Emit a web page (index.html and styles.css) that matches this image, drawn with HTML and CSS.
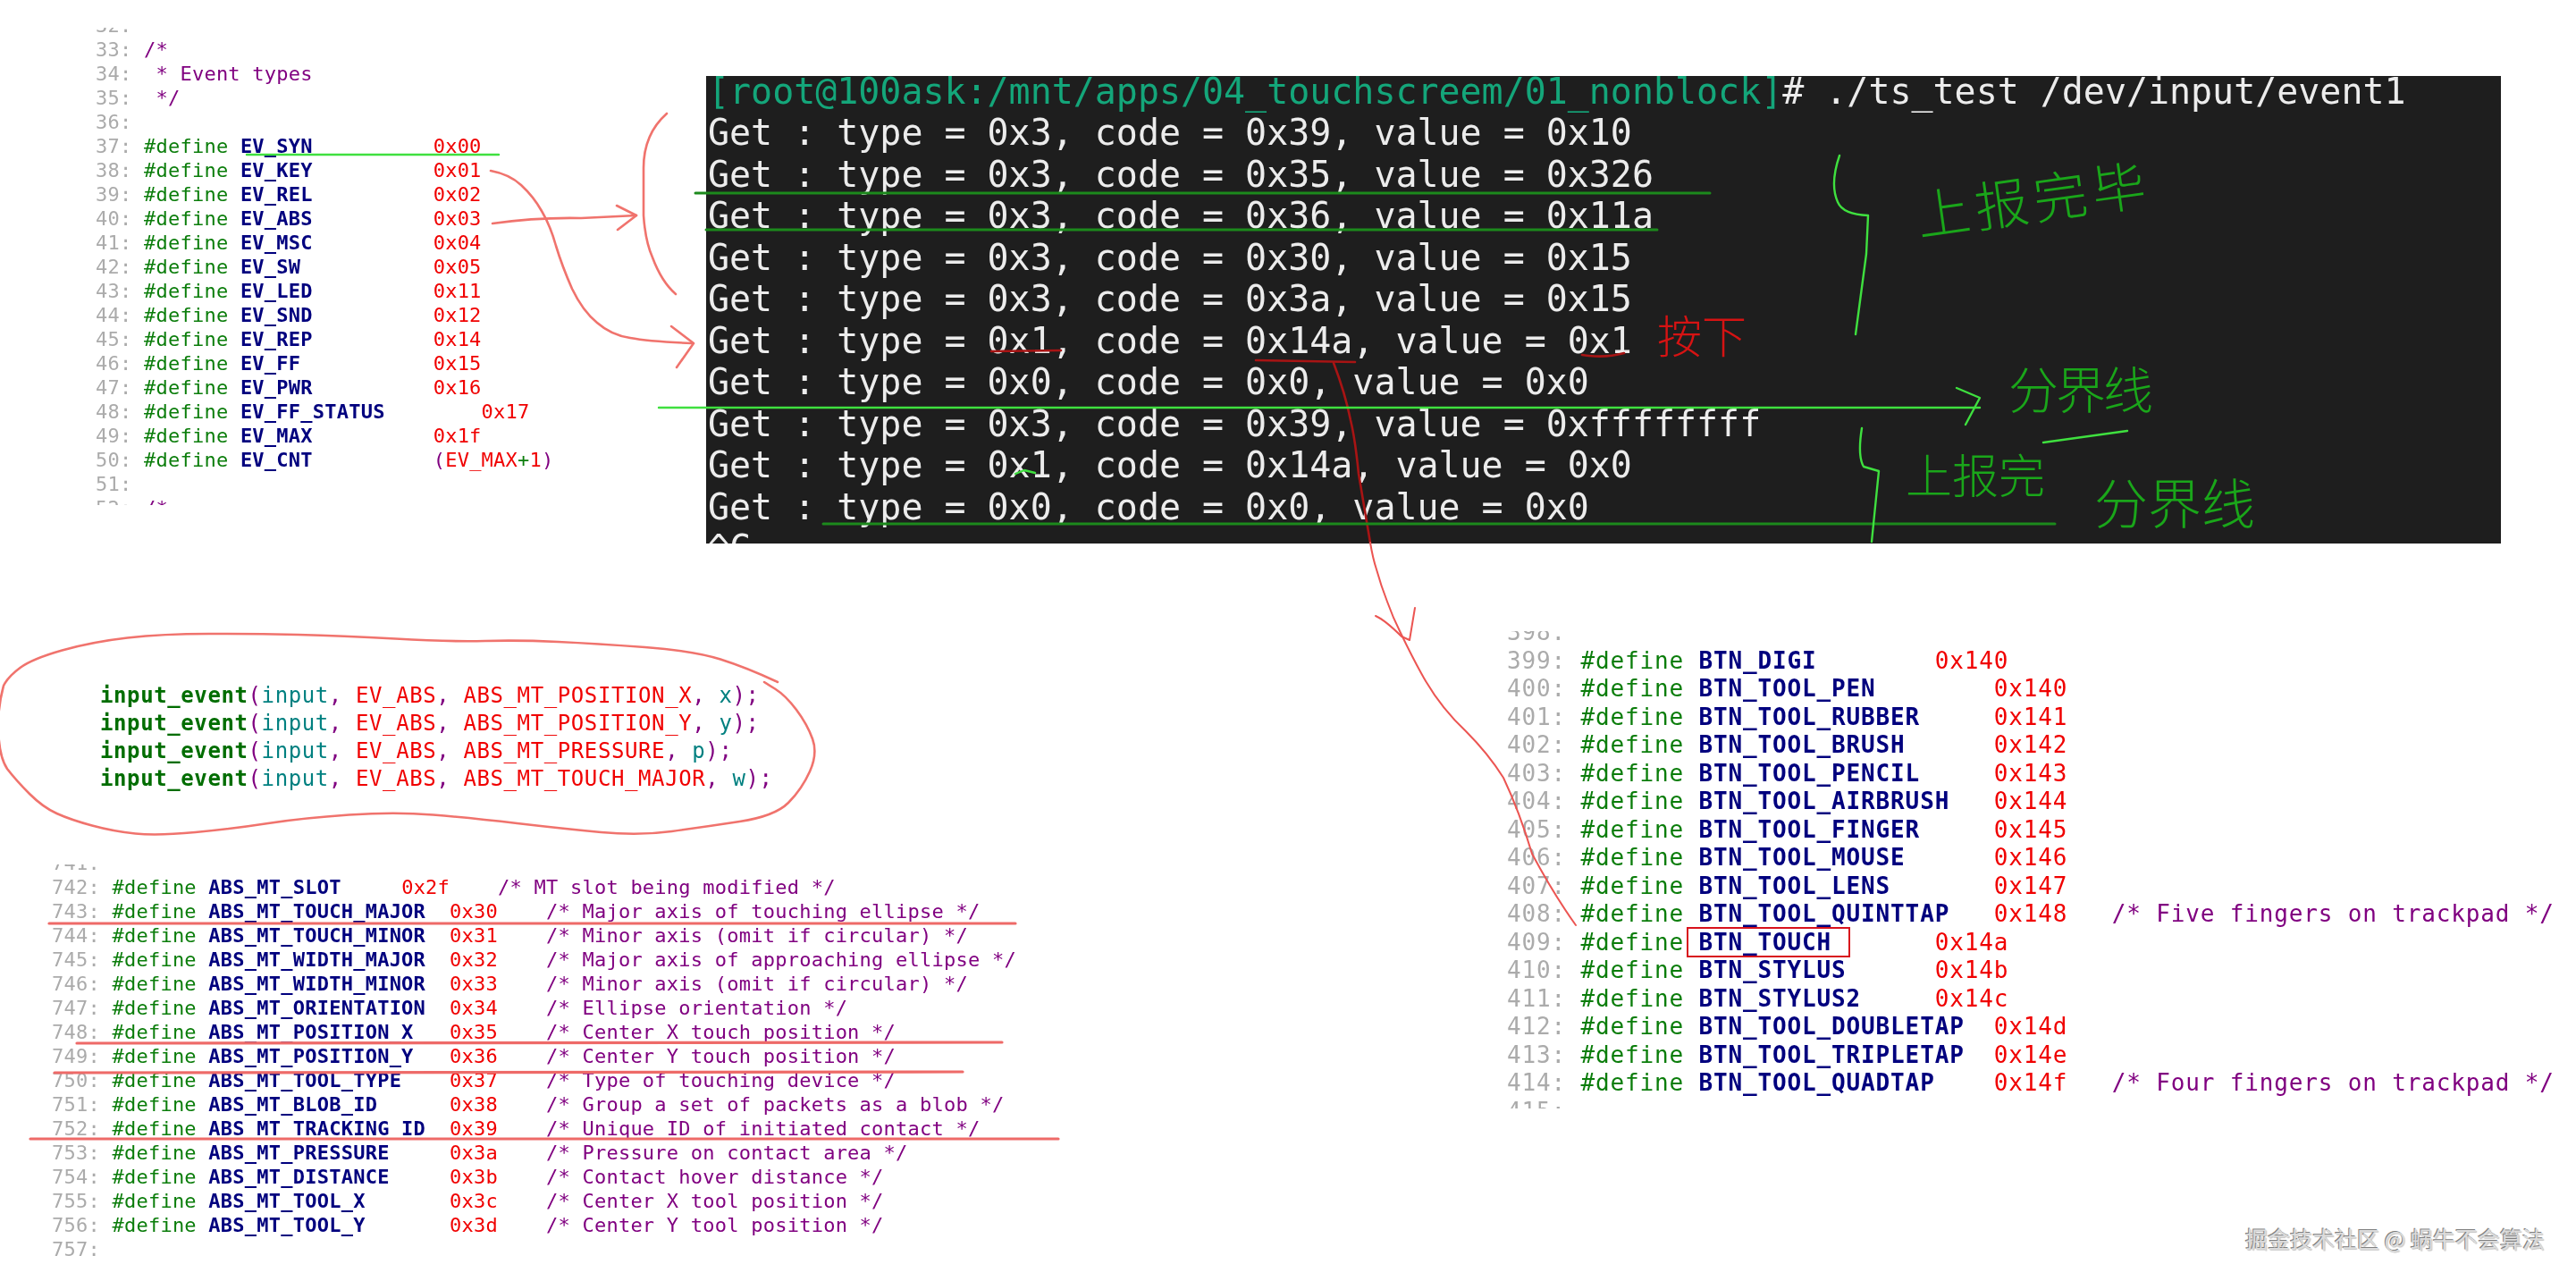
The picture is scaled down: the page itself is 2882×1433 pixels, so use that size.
FILE: index.html
```html
<!DOCTYPE html>
<html lang="zh">
<head>
<meta charset="utf-8">
<title>Touch screen input events</title>
<link rel="stylesheet" href="styles.css">
</head>
<body>
<main class="board">

<section class="shot shot-events"><pre class="code"><span class="ln">32:</span>
<span class="ln">33:</span> <span class="cmt">/*</span>
<span class="ln">34:</span> <span class="cmt"> * Event types</span>
<span class="ln">35:</span> <span class="cmt"> */</span>
<span class="ln">36:</span>
<span class="ln">37:</span> <span class="def">#define</span> <span class="sym">EV_SYN</span>          <span class="val">0x00</span>
<span class="ln">38:</span> <span class="def">#define</span> <span class="sym">EV_KEY</span>          <span class="val">0x01</span>
<span class="ln">39:</span> <span class="def">#define</span> <span class="sym">EV_REL</span>          <span class="val">0x02</span>
<span class="ln">40:</span> <span class="def">#define</span> <span class="sym">EV_ABS</span>          <span class="val">0x03</span>
<span class="ln">41:</span> <span class="def">#define</span> <span class="sym">EV_MSC</span>          <span class="val">0x04</span>
<span class="ln">42:</span> <span class="def">#define</span> <span class="sym">EV_SW</span>           <span class="val">0x05</span>
<span class="ln">43:</span> <span class="def">#define</span> <span class="sym">EV_LED</span>          <span class="val">0x11</span>
<span class="ln">44:</span> <span class="def">#define</span> <span class="sym">EV_SND</span>          <span class="val">0x12</span>
<span class="ln">45:</span> <span class="def">#define</span> <span class="sym">EV_REP</span>          <span class="val">0x14</span>
<span class="ln">46:</span> <span class="def">#define</span> <span class="sym">EV_FF</span>           <span class="val">0x15</span>
<span class="ln">47:</span> <span class="def">#define</span> <span class="sym">EV_PWR</span>          <span class="val">0x16</span>
<span class="ln">48:</span> <span class="def">#define</span> <span class="sym">EV_FF_STATUS</span>        <span class="val">0x17</span>
<span class="ln">49:</span> <span class="def">#define</span> <span class="sym">EV_MAX</span>          <span class="val">0x1f</span>
<span class="ln">50:</span> <span class="def">#define</span> <span class="sym">EV_CNT</span>          <span class="cmt">(</span><span class="val">EV_MAX</span><span class="def">+</span><span class="val">1</span><span class="cmt">)</span>
<span class="ln">51:</span>
<span class="ln">52:</span> <span class="cmt">/*</span></pre></section>

<section class="shot shot-term"><pre class="term"><span class="prompt">[root@100ask:/mnt/apps/04_touchscreem/01_nonblock]</span># ./ts_test /dev/input/event1
Get : type = 0x3, code = 0x39, value = 0x10
Get : type = 0x3, code = 0x35, value = 0x326
Get : type = 0x3, code = 0x36, value = 0x11a
Get : type = 0x3, code = 0x30, value = 0x15
Get : type = 0x3, code = 0x3a, value = 0x15
Get : type = 0x1, code = 0x14a, value = 0x1
Get : type = 0x0, code = 0x0, value = 0x0
Get : type = 0x3, code = 0x39, value = 0xffffffff
Get : type = 0x1, code = 0x14a, value = 0x0
Get : type = 0x0, code = 0x0, value = 0x0
^C</pre></section>

<section class="shot shot-input"><pre class="code code-input"><span class="fn">input_event</span><span class="cmt">(</span><span class="arg">input</span><span class="cmt">,</span> <span class="val">EV_ABS</span><span class="cmt">,</span> <span class="val">ABS_MT_POSITION_X</span><span class="cmt">,</span> <span class="arg">x</span><span class="cmt">);</span>
<span class="fn">input_event</span><span class="cmt">(</span><span class="arg">input</span><span class="cmt">,</span> <span class="val">EV_ABS</span><span class="cmt">,</span> <span class="val">ABS_MT_POSITION_Y</span><span class="cmt">,</span> <span class="arg">y</span><span class="cmt">);</span>
<span class="fn">input_event</span><span class="cmt">(</span><span class="arg">input</span><span class="cmt">,</span> <span class="val">EV_ABS</span><span class="cmt">,</span> <span class="val">ABS_MT_PRESSURE</span><span class="cmt">,</span> <span class="arg">p</span><span class="cmt">);</span>
<span class="fn">input_event</span><span class="cmt">(</span><span class="arg">input</span><span class="cmt">,</span> <span class="val">EV_ABS</span><span class="cmt">,</span> <span class="val">ABS_MT_TOUCH_MAJOR</span><span class="cmt">,</span> <span class="arg">w</span><span class="cmt">);</span></pre></section>

<section class="shot shot-abs"><pre class="code code-abs"><span class="ln">741:</span>
<span class="ln">742:</span> <span class="def">#define</span> <span class="sym">ABS_MT_SLOT</span>     <span class="val">0x2f</span>    <span class="cmt">/* MT slot being modified */</span>
<span class="ln">743:</span> <span class="def">#define</span> <span class="sym">ABS_MT_TOUCH_MAJOR</span>  <span class="val">0x30</span>    <span class="cmt">/* Major axis of touching ellipse */</span>
<span class="ln">744:</span> <span class="def">#define</span> <span class="sym">ABS_MT_TOUCH_MINOR</span>  <span class="val">0x31</span>    <span class="cmt">/* Minor axis (omit if circular) */</span>
<span class="ln">745:</span> <span class="def">#define</span> <span class="sym">ABS_MT_WIDTH_MAJOR</span>  <span class="val">0x32</span>    <span class="cmt">/* Major axis of approaching ellipse */</span>
<span class="ln">746:</span> <span class="def">#define</span> <span class="sym">ABS_MT_WIDTH_MINOR</span>  <span class="val">0x33</span>    <span class="cmt">/* Minor axis (omit if circular) */</span>
<span class="ln">747:</span> <span class="def">#define</span> <span class="sym">ABS_MT_ORIENTATION</span>  <span class="val">0x34</span>    <span class="cmt">/* Ellipse orientation */</span>
<span class="ln">748:</span> <span class="def">#define</span> <span class="sym">ABS_MT_POSITION_X</span>   <span class="val">0x35</span>    <span class="cmt">/* Center X touch position */</span>
<span class="ln">749:</span> <span class="def">#define</span> <span class="sym">ABS_MT_POSITION_Y</span>   <span class="val">0x36</span>    <span class="cmt">/* Center Y touch position */</span>
<span class="ln">750:</span> <span class="def">#define</span> <span class="sym">ABS_MT_TOOL_TYPE</span>    <span class="val">0x37</span>    <span class="cmt">/* Type of touching device */</span>
<span class="ln">751:</span> <span class="def">#define</span> <span class="sym">ABS_MT_BLOB_ID</span>      <span class="val">0x38</span>    <span class="cmt">/* Group a set of packets as a blob */</span>
<span class="ln">752:</span> <span class="def">#define</span> <span class="sym">ABS_MT_TRACKING_ID</span>  <span class="val">0x39</span>    <span class="cmt">/* Unique ID of initiated contact */</span>
<span class="ln">753:</span> <span class="def">#define</span> <span class="sym">ABS_MT_PRESSURE</span>     <span class="val">0x3a</span>    <span class="cmt">/* Pressure on contact area */</span>
<span class="ln">754:</span> <span class="def">#define</span> <span class="sym">ABS_MT_DISTANCE</span>     <span class="val">0x3b</span>    <span class="cmt">/* Contact hover distance */</span>
<span class="ln">755:</span> <span class="def">#define</span> <span class="sym">ABS_MT_TOOL_X</span>       <span class="val">0x3c</span>    <span class="cmt">/* Center X tool position */</span>
<span class="ln">756:</span> <span class="def">#define</span> <span class="sym">ABS_MT_TOOL_Y</span>       <span class="val">0x3d</span>    <span class="cmt">/* Center Y tool position */</span>
<span class="ln">757:</span></pre></section>

<section class="shot shot-btn"><pre class="code code-btn"><span class="ln">398:</span>
<span class="ln">399:</span> <span class="def">#define</span> <span class="sym">BTN_DIGI</span>        <span class="val">0x140</span>
<span class="ln">400:</span> <span class="def">#define</span> <span class="sym">BTN_TOOL_PEN</span>        <span class="val">0x140</span>
<span class="ln">401:</span> <span class="def">#define</span> <span class="sym">BTN_TOOL_RUBBER</span>     <span class="val">0x141</span>
<span class="ln">402:</span> <span class="def">#define</span> <span class="sym">BTN_TOOL_BRUSH</span>      <span class="val">0x142</span>
<span class="ln">403:</span> <span class="def">#define</span> <span class="sym">BTN_TOOL_PENCIL</span>     <span class="val">0x143</span>
<span class="ln">404:</span> <span class="def">#define</span> <span class="sym">BTN_TOOL_AIRBRUSH</span>   <span class="val">0x144</span>
<span class="ln">405:</span> <span class="def">#define</span> <span class="sym">BTN_TOOL_FINGER</span>     <span class="val">0x145</span>
<span class="ln">406:</span> <span class="def">#define</span> <span class="sym">BTN_TOOL_MOUSE</span>      <span class="val">0x146</span>
<span class="ln">407:</span> <span class="def">#define</span> <span class="sym">BTN_TOOL_LENS</span>       <span class="val">0x147</span>
<span class="ln">408:</span> <span class="def">#define</span> <span class="sym">BTN_TOOL_QUINTTAP</span>   <span class="val">0x148</span>   <span class="cmt">/* Five fingers on trackpad */</span>
<span class="ln">409:</span> <span class="def">#define</span> <span class="sym">BTN_TOUCH</span>       <span class="val">0x14a</span>
<span class="ln">410:</span> <span class="def">#define</span> <span class="sym">BTN_STYLUS</span>      <span class="val">0x14b</span>
<span class="ln">411:</span> <span class="def">#define</span> <span class="sym">BTN_STYLUS2</span>     <span class="val">0x14c</span>
<span class="ln">412:</span> <span class="def">#define</span> <span class="sym">BTN_TOOL_DOUBLETAP</span>  <span class="val">0x14d</span>
<span class="ln">413:</span> <span class="def">#define</span> <span class="sym">BTN_TOOL_TRIPLETAP</span>  <span class="val">0x14e</span>
<span class="ln">414:</span> <span class="def">#define</span> <span class="sym">BTN_TOOL_QUADTAP</span>    <span class="val">0x14f</span>   <span class="cmt">/* Four fingers on trackpad */</span>
<span class="ln">415:</span></pre></section>

<div class="mark-box"></div>

<svg class="ink" width="2882" height="1433" viewBox="0 0 2882 1433" aria-hidden="true">
  <g class="ink-red">
    <path d="M549,191 Q570,195 583,207 Q597,220 606,236 Q615.6,252 622,275 Q629,298 640,323 Q652,348 668,361 Q684,375 705,378 Q726,382 774,384"/>
    <path d="M751,365 L776,384 L757,411"/>
    <path d="M551,250 Q600,243 650,244 L712,241"/>
    <path d="M690,230 L712,241 L691,257"/>
    <path d="M746,127 Q720,150 720,188 L720,241 Q722,270 730,288 Q740,315 756,329"/>
    <path d="M870,763 Q836,747 806,737.5 Q776,728 721.5,724 Q667,720 624.5,718 Q582,716 542.5,717 Q503,718 442.5,714.5 Q382,711 333.5,710 Q285,709 233.5,709 Q182,709 142.5,713.5 Q103,718 69.5,727.5 Q36,737 22.5,747 Q9,757 4,767 Q-2,790 -2,810 Q-2,845 8,860 Q18,873 33,888 Q48,903 63.5,910 Q79,917 103,923.5 Q127,930 151.5,932.5 Q176,935 218.5,931 Q261,927 300,921 Q339,915 390.5,911.5 Q442,908 484.5,911.5 Q527,915 578.5,921 Q630,927 672.5,931 Q715,935 751.5,930 Q788,925 827.5,919 Q867,913 882,898 Q897,883 906,863 Q915,843 909,826.5 Q903,810 891,794 Q879,778 867,770.5 Q861,767 855,763"/>
    <path class="strike" d="M55,1033 L1136,1033"/>
    <path class="strike" d="M86,1167 L1121,1166"/>
    <path class="strike" d="M61,1200 L1077,1199"/>
    <path class="strike" d="M34,1274 L1184,1274"/>
  </g>
  <g class="ink-dark">
    <path d="M1109,393 L1187,392"/>
    <path d="M1770,397 Q1795,401 1817,395"/>
    <path d="M1405,403 L1516,405"/>
    <path d="M1492,406 Q1505,440 1511,470 Q1516,490 1520,530 L1533,607"/>
  </g>
  <g class="ink-thin">
    <path d="M1533,607 Q1536,625 1540,637 Q1545,655 1552,673 Q1558,690 1567,708 Q1580,735 1590,753 Q1610,790 1640,818 Q1665,843 1682,870 Q1700,908 1714,955 Q1738,1000 1763,1035"/>
    <path d="M1539,689 Q1550,694 1568,712 L1577,716 L1583,680"/>
  </g>
  <g class="ink-green">
    <path d="M276,173 L558,173"/>
    <path d="M737,456 L2215,456"/>
    <path class="dim" d="M778,216 L1913,216"/>
    <path class="dim" d="M790,257 L1854,257"/>
    <path class="dim" d="M921,586 L2299,586"/>
    <path d="M1136,530 L1146,526 L1158,529"/>
    <path d="M2058,174 Q2047,206 2056,226 Q2062,240 2090,241 L2088,284 L2076,374"/>
    <path d="M2189,434 L2215,445 L2199,475"/>
    <path d="M2286,495 L2380,482"/>
    <path d="M2083,479 Q2078,510 2085,522 L2102,527 L2094,606"/>
  </g>
</svg>

<span class="hand hand-done">上报完毕</span>
<span class="hand hand-down">按下</span>
<span class="hand hand-split">分界线</span>
<span class="hand hand-rep">上报完</span>
<span class="hand hand-split2">分界线</span>

<p class="watermark">掘金技术社区 @ 蜗牛不会算法</p>
</main>
</body>
</html>
```
FILE: styles.css
```css
* { box-sizing: border-box; }
html, body { margin: 0; padding: 0; background: #fff; }

.board {
  position: relative;
  width: 2882px;
  height: 1433px;
  overflow: hidden;
  background: #fff;
}

.shot { position: absolute; overflow: hidden; }

.code, .term {
  margin: 0;
  font-family: "DejaVu Sans Mono", monospace;
  white-space: pre;
  filter: blur(0.45px);
}

.code { font-size: 22px; letter-spacing: 0.24px; line-height: 27px; }

.shot-events { left: 107px; top: 31px; width: 700px; height: 534px; }
.shot-events .code { margin-top: -16px; }

.shot-abs { left: 58px; top: 967px; width: 1130px; height: 453px; }
.code-abs { margin-top: -15px; }

.shot-input { left: 112px; top: 763px; width: 790px; height: 130px; }
.code-input { font-size: 24px; letter-spacing: 0.6px; line-height: 31px; }

.shot-btn { left: 1686px; top: 706px; width: 1190px; height: 534px; }
.code-btn { font-size: 26px; letter-spacing: 0.85px; line-height: 31.5px; margin-top: -14px; }

.ln { color: #ababab; }
.def { color: #0b7d0b; }
.sym { color: #00007e; font-weight: 700; }
.val { color: #f00000; }
.cmt { color: #800080; }
.fn { color: #006d00; font-weight: 700; }
.arg { color: #008080; }

.shot-term {
  left: 790px;
  top: 85px;
  width: 2008px;
  height: 523px;
  background: #1e1e1e;
}
.term {
  margin-top: -6px;
  padding-left: 2px;
  font-size: 39.95px;
  line-height: 46.45px;
  color: #ececec;
}
.prompt { color: #14a67a; }

.mark-box {
  position: absolute;
  left: 1887px;
  top: 1037px;
  width: 183px;
  height: 34px;
  border: 2px solid #d8121c;
}

.ink { position: absolute; left: 0; top: 0; pointer-events: none; }
.ink path { fill: none; stroke-linecap: round; stroke-linejoin: round; }
.ink-red path { stroke: #f0736d; stroke-width: 2.6px; }
.ink-red .strike { stroke: #ee6a68; stroke-width: 3.2px; }
.ink-dark path { stroke: #a81414; stroke-width: 2.6px; }
.ink-thin path { stroke: #ec5552; stroke-width: 2px; }
.ink-green path { stroke: #3fe03f; stroke-width: 2.4px; }
.ink-green .dim { stroke: #1c8a1c; stroke-width: 3px; }

.hand {
  position: absolute;
  font-family: "Noto Sans CJK SC", sans-serif;
  font-weight: 300;
  color: #1aa61a;
  white-space: nowrap;
  line-height: 1;
}
.hand-done { left: 2148px; top: 208px; font-size: 60px; letter-spacing: 6px; transform: rotate(-8deg); transform-origin: left bottom; }
.hand-down { left: 1854px; top: 348px; font-size: 50px; color: #d61313; }
.hand-split { left: 2247px; top: 405px; font-size: 56px; letter-spacing: -3px; }
.hand-rep { left: 2132px; top: 504px; font-size: 52px; }
.hand-split2 { left: 2343px; top: 530px; font-size: 60px; }

.watermark {
  position: absolute;
  left: 2512px;
  top: 1370px;
  margin: 0;
  font-family: "Noto Sans CJK SC", sans-serif;
  font-size: 25px;
  line-height: 30px;
  white-space: nowrap;
  color: #dcdcdc;
  text-shadow: -1px -1px 0 #808080, 1px 1px 1px #c4c4c4;
}
```
